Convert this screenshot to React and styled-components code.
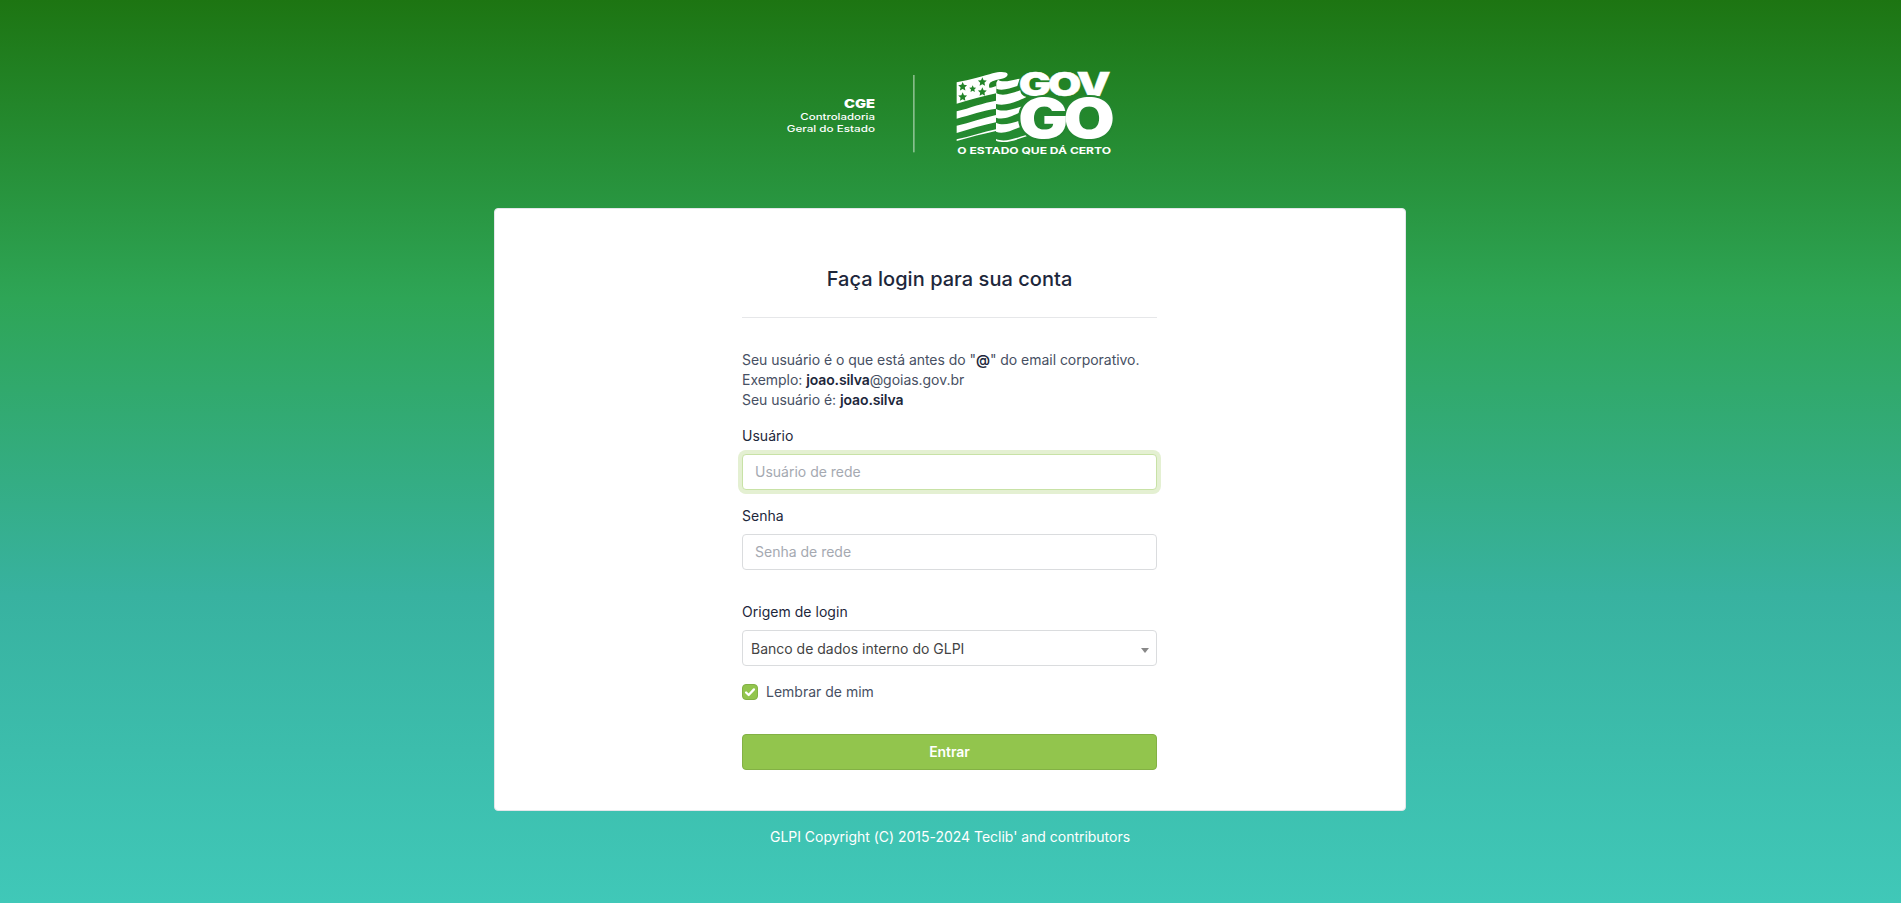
import React from 'react';
import styled, { createGlobalStyle, css } from 'styled-components';

const GlobalStyle = createGlobalStyle`
  *, *::before, *::after { box-sizing: border-box; }
  body {
    margin: 0;
    font-family: Inter, "Liberation Sans", sans-serif;
    font-size: 14px;
    line-height: 20px;
    color: #1d273b;
  }
`;

const Page = styled.div`
  min-height: 100vh;
  padding-right: 1px;
  display: flex;
  flex-direction: column;
  align-items: center;
  background: linear-gradient(180deg, #1d7512 0%, #2ea556 33%, #38b2a0 66%, #40c8b8 100%);
`;

const Header = styled.header`
  height: 208px;
  padding: 60px 0 0 1px;
`;

const Logo = styled.svg`
  display: block;
  width: 341px;
  height: 110px;
`;

const LogoText = styled.text`
  font-family: Inter, sans-serif;
  font-size: ${(p) => p.$size}px;
  font-weight: ${(p) => p.$weight};
  letter-spacing: ${(p) => p.$spacing || 0}px;
  fill: #fff;
`;

const Card = styled.main`
  width: 912px;
  height: 603px;
  display: flex;
  flex-direction: column;
  align-items: center;
  padding-top: 58px;
  background: #fff;
  border: 1px solid #e3e6ea;
  border-radius: 4px;
`;

const Form = styled.form`
  width: 415px;
  margin-right: 1px;
  display: flex;
  flex-direction: column;
`;

const Title = styled.h2`
  margin: 0;
  padding-bottom: 26px;
  border-bottom: 1px solid #e6e7e9;
  font-size: 20px;
  font-weight: 500;
  line-height: 24px;
  letter-spacing: 0.04px;
  text-align: center;
`;

const Hint = styled.p`
  margin: 32px 0 16px;
  color: #475063;
  letter-spacing: -0.035px;
  white-space: nowrap;
  b { font-weight: 600; color: #1d273b; letter-spacing: -0.12px; }
`;

const Field = styled.div`
  margin-bottom: ${(p) => p.$gap}px;
`;

const Label = styled.label`
  display: block;
  margin-bottom: 8px;
  letter-spacing: 0.03px;
`;

const box = css`
  width: 100%;
  height: 36px;
  border: 1px solid #dadcde;
  border-radius: 4px;
  background: #fff;
  font: inherit;
`;

const Input = styled.input`
  ${box}
  display: block;
  padding: 0 12px 1px;
  outline: none;
  ${(p) => p.$active && css`
    border-color: #c8e2a6;
    box-shadow: 0 0 0 4px #e4f0d2;
  `}
  &::placeholder { color: #a5a9b1; opacity: 1; }
`;

const Select = styled.div`
  ${box}
  display: flex;
  align-items: center;
  justify-content: space-between;
  padding: 2px 7px 0 8px;
  color: #444;
`;

const Caret = styled.span`
  margin-top: 2px;
  border: 4px solid transparent;
  border-top: 5px solid #888;
  border-bottom: 0;
`;

const Remember = styled.label`
  display: flex;
  align-items: center;
  gap: 8px;
  height: 20px;
  margin-bottom: 32px;
  color: #475063;
`;

const Check = styled.span`
  display: flex;
  width: 16px;
  height: 16px;
  background: #92c54d;
  border: 1px solid #83b145;
  border-radius: 4px;
`;

const Submit = styled.button`
  ${box}
  background: #92c54d;
  border-color: #83b145;
  color: #fff;
  font-weight: 600;
  letter-spacing: -0.05px;
`;

const Footer = styled.footer`
  padding-top: 16px;
  letter-spacing: -0.02px;
  color: #fff;
`;

const stars = [[68, 80, 14], [127, 66, 14], [98, 87, 11], [68, 111, 14], [127, 96, 14]];

const starPoints = (cx, cy, r) =>
  Array.from({ length: 10 }, (_, i) => {
    const a = -Math.PI / 2 + (i * Math.PI) / 5;
    const d = i % 2 ? r * 0.48 : r;
    return `${(cx + d * Math.cos(a)).toFixed(1)},${(cy + d * Math.sin(a)).toFixed(1)}`;
  }).join(' ');

function BrandLogo() {
  return (
    <Logo viewBox="0 0 1023 330">
      <g textAnchor="end">
        <LogoText $size={36} $weight={900} x="285" y="143" textLength="93" lengthAdjust="spacingAndGlyphs">CGE</LogoText>
        <LogoText $size={27} $weight={500} x="285" y="180" textLength="224" lengthAdjust="spacingAndGlyphs">Controladoria</LogoText>
        <LogoText $size={27} $weight={500} x="285" y="215" textLength="265" lengthAdjust="spacingAndGlyphs">Geral do Estado</LogoText>
      </g>
      <rect x="399" y="45" width="5" height="232" fill="#fff" opacity=".45" />
      <g transform="translate(480 0)" fill="#fff">
        <path d="M50 67 C90 60 135 47 158 40 C178 34 202 34 203 43 C204 55 178 58 162 62 C148 66 146 72 148 83 C156 84 162 80 169 78 V100 C130 108 90 119 50 131Z" />
        <path d="M174 59 C188 71 220 58 239 56 L232 78 C210 84 187 94 169 86 V68Z" />
        <path d="M168 99 C190 112 222 97 241 91 C242 103 250 109 259 111 C235 123 198 140 168 132Z" />
        <path d="M168 147 C190 159 220 145 251 139 L238 158 C218 168 191 181 168 173Z" />
        <path d="M168 188 C190 200 217 187 238 183 L242 201 C218 209 190 225 168 215Z" />
        <path d="M168 237 C195 248 224 235 259 225 L260 229 C225 240 196 253 168 242Z" />
        <path d="M50 154 C90 144 130 128 168 122 V146 C130 151 90 165 50 176Z" />
        <path d="M50 197 C90 189 130 173 168 165 V187 C130 194 90 208 50 219Z" />
        <path d="M50 238 C90 230 130 216 168 208 V213 C130 221 90 232 50 243Z" />
        {stars.map(([x, y, r]) => (
          <polygon key={`${x}-${y}`} points={starPoints(x, y, r)} fill="#228429" />
        ))}
        <LogoText $size={99} $weight={900} $spacing={-7} x="236" y="109" textLength="267" lengthAdjust="spacingAndGlyphs" stroke="#fff" strokeWidth="1">GOV</LogoText>
        <LogoText $size={164} $weight={900} $spacing={-12} x="235" y="234" textLength="275" lengthAdjust="spacingAndGlyphs" stroke="#248731" strokeWidth="12" strokeLinejoin="round" paintOrder="stroke">GO</LogoText>
        <LogoText $size={28} $weight={700} x="52" y="281" textLength="461" lengthAdjust="spacingAndGlyphs">O ESTADO QUE DÁ CERTO</LogoText>
      </g>
    </Logo>
  );
}

export default function App() {
  return (
    <Page>
      <GlobalStyle />
      <Header><BrandLogo /></Header>
      <Card>
        <Form>
          <Title>Faça login para sua conta</Title>
          <Hint>
            Seu usuário é o que está antes do "<b>@</b>" do email corporativo.<br />
            Exemplo: <b>joao.silva</b>@goias.gov.br<br />
            Seu usuário é: <b>joao.silva</b>
          </Hint>
          <Field $gap={16}>
            <Label htmlFor="user">Usuário</Label>
            <Input id="user" placeholder="Usuário de rede" $active />
          </Field>
          <Field $gap={32}>
            <Label htmlFor="pass">Senha</Label>
            <Input id="pass" type="password" placeholder="Senha de rede" />
          </Field>
          <Field $gap={16}>
            <Label as="div">Origem de login</Label>
            <Select>Banco de dados interno do GLPI<Caret /></Select>
          </Field>
          <Remember>
            <Check>
              <svg viewBox="0 0 16 16" width="14" height="14" fill="none" stroke="#fff" strokeWidth="2.6" strokeLinecap="round" strokeLinejoin="round">
                <path d="M3.5 8.5L6.5 11.5L12.5 5" />
              </svg>
            </Check>
            Lembrar de mim
          </Remember>
          <Submit type="button">Entrar</Submit>
        </Form>
      </Card>
      <Footer>GLPI Copyright (C) 2015-2024 Teclib' and contributors</Footer>
    </Page>
  );
}
